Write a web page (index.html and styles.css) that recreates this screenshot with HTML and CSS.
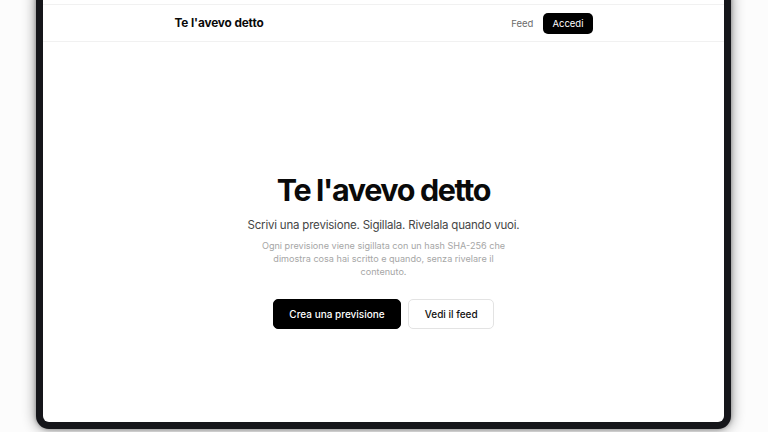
FILE: index.html
```html
<!DOCTYPE html>
<html lang="it">
<head>
<meta charset="utf-8">
<title>Te l'avevo detto</title>
<link rel="stylesheet" href="styles.css">
</head>
<body>
<div class="device">
  <div class="screen">
    <header class="topbar">
      <div class="topbar-inner">
        <a class="brand" href="#">Te l'avevo detto</a>
        <nav class="nav">
          <a class="nav-link" href="#">Feed</a>
          <a class="nav-btn" href="#">Accedi</a>
        </nav>
      </div>
    </header>
    <main class="hero">
      <h1 class="hero-title">Te l'avevo detto</h1>
      <p class="hero-sub">Scrivi una previsione. Sigillala. Rivelala quando vuoi.</p>
      <p class="hero-note">Ogni previsione viene sigillata con un hash SHA-256 che dimostra cosa hai scritto e quando, senza rivelare il contenuto.</p>
      <div class="hero-actions">
        <a class="btn btn-primary" href="#">Crea una previsione</a>
        <a class="btn btn-outline" href="#">Vedi il feed</a>
      </div>
    </main>
  </div>
</div>
</body>
</html>
```

FILE: styles.css
```css
* { box-sizing: border-box; }
html, body { margin: 0; padding: 0; }
body {
  width: 768px;
  height: 432px;
  overflow: hidden;
  background: #fcfcfc;
  font-family: Inter, "Liberation Sans", sans-serif;
  color: #0a0a0a;
}
a { text-decoration: none; color: inherit; }

.device {
  width: 695px;
  height: 445px;
  margin: -16px 0 0 36px;
  border: 7px solid #15161a;
  border-radius: 13px;
  background: #15161a;
  box-shadow: 0 0 14px rgba(0,0,0,0.45), 0 0 4px rgba(0,0,0,0.3);
}
.screen {
  width: 100%;
  height: 100%;
  background: #fff;
  border-radius: 6px;
  overflow: hidden;
  padding-top: 13px;
  display: flex;
  flex-direction: column;
}

.topbar {
  height: 38px;
  border-top: 1px solid #f1f1f1;
  border-bottom: 1px solid #f1f1f1;
}
.topbar-inner {
  width: 418px;
  height: 100%;
  margin: 0 auto;
  display: flex;
  align-items: center;
  justify-content: space-between;
}
.brand {
  font-size: 11.8px;
  font-weight: 700;
  letter-spacing: -0.01em;
}
.nav {
  display: flex;
  align-items: center;
  gap: 10px;
}
.nav-link {
  font-size: 9.5px;
  color: #6b6b6b;
}
.nav-btn {
  font-size: 9.5px;
  color: #fff;
  background: #000;
  border-radius: 5px;
  padding: 0 9px;
  height: 21px;
  line-height: 21px;
}

.hero {
  flex: 1;
  display: flex;
  flex-direction: column;
  align-items: center;
  text-align: center;
  padding-top: 130px;
}
.hero-title {
  margin: 0;
  font-size: 30.5px;
  line-height: 35px;
  font-weight: 700;
  letter-spacing: -0.045em;
}
.hero-sub {
  margin: 8px 0 0;
  font-size: 11.5px;
  line-height: 20px;
  letter-spacing: -0.2px;
  color: #454545;
}
.hero-note {
  margin: 4px 0 0;
  width: 262px;
  font-size: 9.1px;
  line-height: 13px;
  color: #a6a6a6;
}
.hero-actions {
  margin-top: 21px;
  display: flex;
  gap: 7px;
}
.btn {
  height: 30px;
  line-height: 28px;
  border-radius: 5px;
  font-size: 10px;
  font-weight: 500;
  padding: 0 15.5px;
  border: 1px solid transparent;
}
.btn-primary {
  background: #000;
  color: #fff;
  border-color: #000;
}
.btn-outline {
  background: #fff;
  color: #111;
  border-color: #e3e3e3;
}
```
